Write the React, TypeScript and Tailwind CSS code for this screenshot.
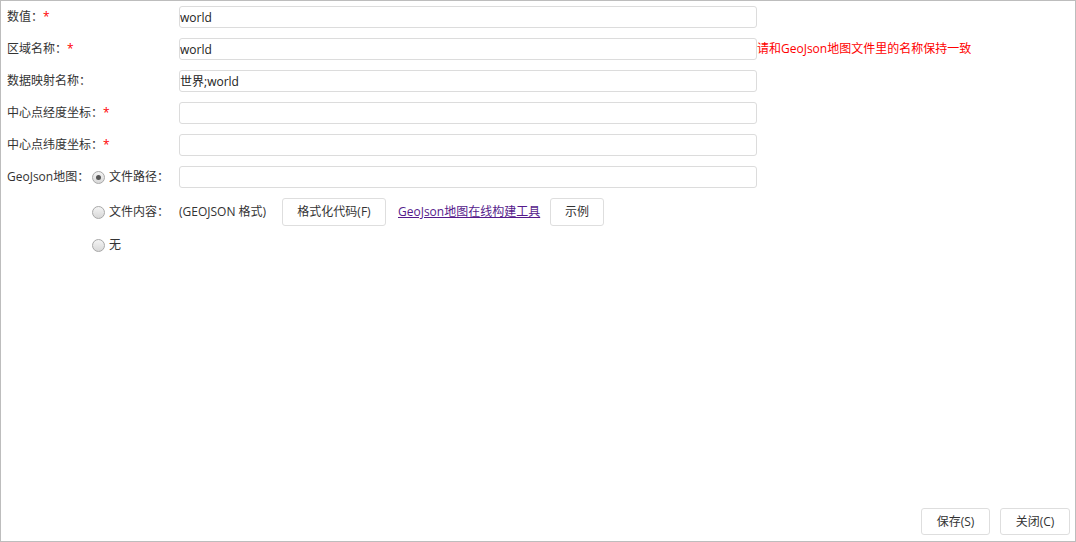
import { type ReactNode } from 'react'

const FONT = '"Open Sans", "Noto Sans CJK SC", sans-serif'

function Radio({ checked }: { checked?: boolean }) {
  return (
    <span className="flex h-[13px] w-[13px] items-center justify-center rounded-full border border-[#a8a8a8] bg-gradient-to-b from-[#f4f4f4] to-[#d8d8d8]">
      {checked && <span className="h-[5px] w-[5px] rounded-full bg-[#555]" />}
    </span>
  )
}

function Field({ value }: { value?: string }) {
  return (
    <input
      readOnly
      value={value ?? ''}
      className="h-[22px] w-[578px] rounded-[3px] border border-[#dcdcdc] bg-white px-0 text-[12px] text-[#222] outline-none"
      style={{ fontFamily: FONT }}
    />
  )
}

function Btn({ children, className = '' }: { children: ReactNode; className?: string }) {
  return (
    <button className={`rounded-[3px] border border-[#dedede] bg-white text-[12px] text-[#333] ${className}`}>
      {children}
    </button>
  )
}

function Row({ label, required, value, extra }: { label: string; required?: boolean; value?: string; extra?: ReactNode }) {
  return (
    <div className="flex h-[22px] items-center">
      <div className="w-[172px]">
        {label}
        {required && <span className="text-[#f00]">*</span>}
      </div>
      <Field value={value} />
      {extra}
    </div>
  )
}

export default function App() {
  return (
    <div
      className="flex h-[542px] w-[1076px] flex-col border border-[#bdbdbd] bg-white text-[12px] text-[#333]"
      style={{ fontFamily: FONT }}
    >
      <div className="flex flex-col gap-[10px] pl-[6px] pt-[5px]">
        <Row label="数值：" required value="world" />
        <Row
          label="区域名称："
          required
          value="world"
          extra={<span className="text-[#f00]">请和GeoJson地图文件里的名称保持一致</span>}
        />
        <Row label="数据映射名称：" value="世界;world" />
        <Row label="中心点经度坐标：" required />
        <Row label="中心点纬度坐标：" required />

        {/* GeoJson 地图来源 */}
        <div className="flex h-[22px] items-center">
          <div className="w-[85px]">GeoJson地图：</div>
          <Radio checked />
          <span className="ml-[4px] w-[70px]">文件路径：</span>
          <Field />
        </div>
      </div>

      <div className="mt-[10px] flex h-[28px] items-center pl-[91px]">
        <Radio />
        <span className="ml-[4px] w-[70px]">文件内容：</span>
        <span className="w-[92px] whitespace-nowrap">(GEOJSON 格式)</span>
        <Btn className="ml-[11px] h-[28px] w-[104px]">格式化代码(F)</Btn>
        <a href="#" className="ml-[12px] w-[144px] whitespace-nowrap text-[#551a8b] underline">
          GeoJson地图在线构建工具
        </a>
        <Btn className="ml-[8px] h-[28px] w-[54px]">示例</Btn>
      </div>

      <div className="mt-[8px] flex h-[22px] items-center pl-[91px]">
        <Radio />
        <span className="ml-[4px]">无</span>
      </div>

      <div className="mt-auto flex justify-end gap-[10px] pb-[6px] pr-[5px]">
        <Btn className="h-[27px] w-[69px]">保存(S)</Btn>
        <Btn className="h-[27px] w-[70px]">关闭(C)</Btn>
      </div>
    </div>
  )
}
